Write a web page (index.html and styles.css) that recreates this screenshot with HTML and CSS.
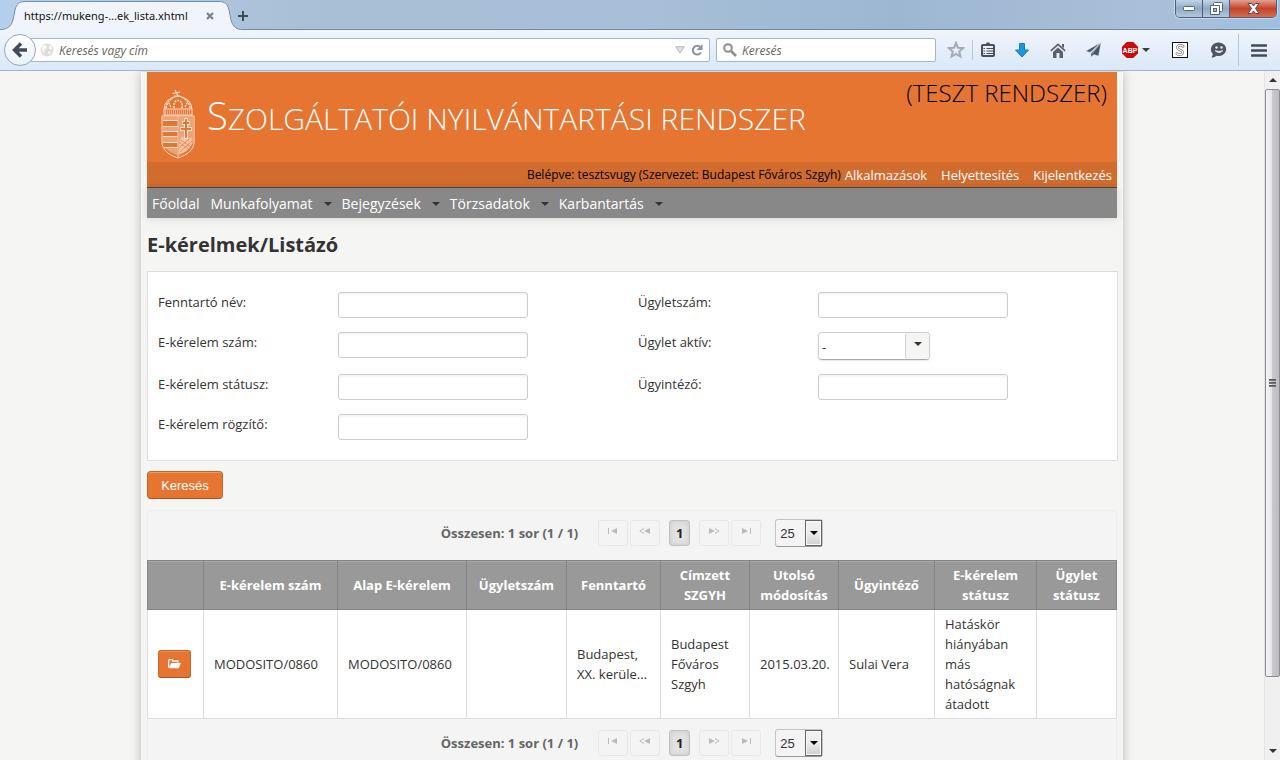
FILE: index.html
```html
<!DOCTYPE html>
<html lang="hu">
<head>
<meta charset="utf-8">
<title>E-kérelmek/Listázó</title>
<link rel="stylesheet" href="styles.css">
</head>
<body>
<div class="titlebar">
  <div class="tab">
    <svg class="tab-shape" viewBox="0 0 244 30" aria-hidden="true">
      <path d="M0 29.5C7 29.5 11 27 13 20L15 10C16.500 4 19 1.500 25 1.500H219C225 1.500 227.500 4 229 10L231 20C233 27 236 29.500 243 29.500V30H0Z" fill="#f1f5fb"/>
      <path d="M0 29.500C7 29.500 11 27 13 20L15 10C16.500 4 19 1.500 25 1.500H219C225 1.500 227.500 4 229 10L231 20C233 27 236 29.500 243 29.500" fill="none" stroke="#7590ae"/>
    </svg>
    <span class="tab-title">https://mukeng-...ek_lista.xhtml</span>
    <button class="tab-close" aria-label="Lap bezárása"><svg width="8" height="8" viewBox="0 0 8 8"><path d="M1 1L7 7M7 1L1 7" stroke="#77828e" stroke-width="2.200"/></svg></button>
  </div>
  <button class="tab-new" aria-label="Új lap"><svg width="10" height="10" viewBox="0 0 10 10"><path d="M5 0V10M0 5H10" stroke="#414c56" stroke-width="2"/></svg></button>
  <div class="window-buttons">
    <button class="win-btn" aria-label="Kis méret"><svg width="12" height="5" viewBox="0 0 12 5"><rect x=".5" y=".5" width="11" height="4" rx="1" fill="#fff" stroke="#53647a"/></svg></button>
    <button class="win-btn" aria-label="Előző méret"><svg width="13" height="13" viewBox="0 0 13 13"><rect x="3.500" y=".5" width="9" height="9" rx="1" fill="#fff" stroke="#53647a"/><path d="M.5 3.500H9.500V12.500H.500Z" fill="#fff" stroke="#53647a"/><rect x="3.500" y="6.500" width="3" height="3" fill="#a8bbd3" stroke="#53647a"/></svg></button>
    <button class="win-btn win-close" aria-label="Bezárás"><svg width="13" height="11" viewBox="0 0 13 11"><path d="M1 .5H4.500L6.500 3L8.500 .5H12L8.500 5.500L12 10.500H8.500L6.500 8L4.500 10.500H1L4.500 5.500Z" fill="#fff" stroke="#5b4450"/></svg></button>
  </div>
</div>

<div class="toolbar">
  <button class="back" aria-label="Vissza"><svg width="16" height="16" viewBox="0 0 16 16"><path d="M9 1.500L2.500 8L9 14.500M3 8H15" fill="none" stroke="#414c56" stroke-width="3.400"/></svg></button>
  <div class="urlbar">
    <svg width="14" height="14" viewBox="0 0 14 14" aria-hidden="true"><circle cx="7" cy="7" r="6.500" fill="#dcdcdc"/><path d="M2 3L6 2L7 5L4 7L5 11L2 8ZM9 2L12 4V7L9 6ZM8 8L11 9L9 12Z" fill="#f8f8f8"/></svg>
    <input class="bar-input" type="text" aria-label="Keresés vagy cím" placeholder="Keresés vagy cím">
    <svg width="10" height="8" viewBox="0 0 10 8" aria-hidden="true"><path d="M.8 .8H9.200L5 7Z" fill="#dfe4ea" stroke="#a9b3be"/></svg>
    <button class="reload" aria-label="Frissítés"><svg width="12" height="12" viewBox="0 0 12 12"><path d="M9.500 3.200A4.400 4.400 0 1 0 10 8.500" fill="none" stroke="#8793a1" stroke-width="2"/><path d="M11.500 0V6H5.500Z" fill="#8793a1"/></svg></button>
  </div>
  <div class="searchbar">
    <svg width="14" height="14" viewBox="0 0 14 14" aria-hidden="true"><circle cx="5" cy="5" r="3.800" fill="none" stroke="#8f8f8f" stroke-width="2"/><path d="M8 8L13 13" stroke="#8f8f8f" stroke-width="2.600"/></svg>
    <input class="bar-input" type="text" aria-label="Keresés" placeholder="Keresés">
  </div>
  <div class="tools">
    <button class="tool tool-small" aria-label="Könyvjelző"><svg width="18" height="18" viewBox="0 0 18 18"><path d="M9 2L11 6.800L16 7.200L12.200 10.500L13.400 15.500L9 12.800L4.600 15.500L5.800 10.500L2 7.200L7 6.800Z" fill="none" stroke="#a4abb4" stroke-width="2"/></svg></button>
    <button class="tool tool-small split" aria-label="Könyvjelzők"><svg width="14" height="16" viewBox="0 0 14 16"><rect x="1" y="3" width="12" height="11" rx="1" fill="none" stroke="#46515c" stroke-width="2"/><path d="M3 4V2.500H5L5.500 .5H8.500L9 2.500H11V4Z" fill="#46515c"/><path d="M2.500 6.500H4M5.500 6.500H12M2.500 9H4M5.500 9H12M2.500 11.500H4M5.500 11.500H12" stroke="#46515c" stroke-width="1.200"/></svg></button>
    <button class="tool" aria-label="Letöltések"><svg width="14" height="15" viewBox="0 0 14 15"><path d="M4.500 .5H9.500V7H13.500L7 14L.5 7H4.500Z" fill="#1c97dd" stroke="#157fbf"/></svg></button>
    <button class="tool" aria-label="Kezdőlap"><svg width="16" height="15" viewBox="0 0 16 15"><path d="M.8 7.800L8 1.400L15.200 7.800" fill="none" stroke="#56616c" stroke-width="1.600"/><path d="M3 9L8 4.600L13 9V15H9.500V10H6.500V15H3ZM12 1H14V5L12 3.500Z" fill="#56616c"/></svg></button>
    <button class="tool" aria-label="Küldés"><svg width="16" height="16" viewBox="0 0 16 16"><path d="M15 .5L0 9L4 10.500ZM15 .5L5 11.500V15L8 12.500L12.500 14ZM15 .5L6 12" fill="#4b5661" stroke="#dce8f5" stroke-width=".4"/></svg></button>
    <button class="tool tool-wide" aria-label="Adblock Plus"><svg width="16" height="16" viewBox="0 0 16 16"><path d="M4.700 0H11.300L16 4.700V11.300L11.300 16H4.700L0 11.300V4.700Z" fill="#c90b0b"/><text class="abp" x="8" y="11" text-anchor="middle">ABP</text></svg><svg width="8" height="4" viewBox="0 0 8 4"><path d="M0 0H8L4 4Z" fill="#333e48"/></svg></button>
    <button class="tool tool-s" aria-label="Stylish"><svg width="16" height="16" viewBox="0 0 16 16"><rect x=".5" y=".5" width="15" height="15" fill="#fff" stroke="#111"/><path d="M11 5.500V4Q8 2.500 6 4Q4 6.500 8 8Q12 9.500 10 12Q7.500 13.500 5 12V10.500" fill="none" stroke="#777" stroke-width="2.600"/><path d="M11 5V4Q8 2.500 6 4Q4 6.500 8 8Q12 9.500 10 12Q7.500 13.500 5 12V11" fill="none" stroke="#fff" stroke-width="1.200"/></svg></button>
    <button class="tool tool-s" aria-label="Hello"><svg width="17" height="16" viewBox="0 0 17 16"><path d="M9 .5A7.500 6.800 0 1 1 6.500 13.800Q4 16 1.500 15.200Q3 13.500 2.600 11.500A7.500 6.800 0 0 1 9 .5Z" fill="#4b5661"/><circle cx="6.500" cy="5.500" r="1.200" fill="#e8f0f8"/><circle cx="11.500" cy="5.500" r="1.200" fill="#e8f0f8"/><path d="M5 8.500Q9 13 13 8.500Q9 10 5 8.500Z" fill="#e8f0f8" stroke="#e8f0f8" stroke-width=".6"/></svg></button>
    <button class="tool tool-menu split" aria-label="Menü"><svg width="16" height="13" viewBox="0 0 16 13"><path d="M1 1.500H15M1 6.500H15M1 11.500H15" stroke="#414c56" stroke-width="2.600" stroke-linecap="round"/></svg></button>
  </div>
</div>

<div class="viewport">
  <div class="scroll-area">
    <main class="page">
      <header>
        <div class="banner">
          <svg class="crest" width="34" height="70" viewBox="0 0 34 70" aria-hidden="true">
            <g fill="none" stroke="#fbe3d5">
              <path d="M14 1L17 7M11.500 4.500L19 3M13 7H19" stroke-width="1.200"/>
              <path d="M3 20Q4 9 17 7Q30 9 31 20M3 20H31V26H3Z"/>
              <path d="M5 19Q6 12 12 9M29 19Q28 12 22 9M13 19V14Q17 9 21 14V19M10 18L8 14M24 18L26 14" stroke-width="1.500" stroke-dasharray="2 1"/>
              <path d="M4 22H30M4 24H30" stroke-dasharray="1 1"/>
              <path d="M1 27H33V53C33 61 26 66 17 69C8 66 1 61 1 53Z"/>
              <path d="M17 27V68"/>
              <path d="M2 31.500H17M2 37.500H17M2 42.500H17M2 47.500H17M2 53.500H17M3 58.500H17"/>
            </g>
            <path d="M2 28H16V31H2ZM2 38H16V42H2ZM2 48H16V53H2ZM4 59H16V66Q8 63 4 59ZM18 28H32V53Q31 60 18 66Z" fill="#fbe3d5" opacity=".42"/>
            <path d="M25 29V50M21 34H29M19 40H31" stroke="#fbe3d5" stroke-width="4" fill="none"/>
            <path d="M25 30V49M22 34H28M20 40H30" stroke="#e67531" stroke-width="2" fill="none"/>
            <path d="M19 51L21 47L24 50L26 47L28 50L30 48L31 51V54Q30 61 18 66V56Z" fill="#fbe3d5" opacity=".5"/>
            <path d="M18 53L28 61M20 51L30 58M31 52L19 63M28 50L18 59" stroke="#e67531" stroke-width=".7"/>
          </svg>
          <div class="brand">Szolgáltatói nyilvántartási rendszer</div>
          <div class="env">(TESZT RENDSZER)</div>
        </div>
        <div class="userbar">
          <span class="who">Belépve: tesztsvugy (Szervezet: Budapest Főváros Szgyh)</span>
          <a href="#">Alkalmazások</a><a href="#">Helyettesítés</a><a href="#">Kijelentkezés</a>
        </div>
        <nav class="nav">
          <a href="#">Főoldal</a>
          <a class="has-menu" href="#">Munkafolyamat</a>
          <a class="has-menu" href="#">Bejegyzések</a>
          <a class="has-menu" href="#">Törzsadatok</a>
          <a class="has-menu" href="#">Karbantartás</a>
        </nav>
      </header>

      <h1>E-kérelmek/Listázó</h1>

      <form id="filter" class="filter">
        <label for="f1">Fenntartó név:</label><input class="field" id="f1" type="text">
        <label for="f2">Ügyletszám:</label><input class="field" id="f2" type="text">
        <label for="f3">E-kérelem szám:</label><input class="field" id="f3" type="text">
        <label for="f4">Ügylet aktív:</label><span class="combo"><select id="f4"><option>-</option></select><span class="combo-arrow"></span></span>
        <label for="f5">E-kérelem státusz:</label><input class="field" id="f5" type="text">
        <label for="f6">Ügyintéző:</label><input class="field" id="f6" type="text">
        <label for="f7">E-kérelem rögzítő:</label><input class="field" id="f7" type="text">
      </form>
      <button class="primary" type="submit" form="filter">Keresés</button>

      <div class="pager pager-top">
        <span>Összesen: 1 sor (1 / 1)</span>
        <div class="pager-nav">
          <button class="pg" disabled aria-label="Első"><svg width="10" height="6" viewBox="0 0 10 6"><path d="M0 0H1V6H0ZM9 0V6L3 3Z"/></svg></button>
          <button class="pg" disabled aria-label="Előző"><svg width="12" height="6" viewBox="0 0 12 6"><path d="M11 0V6L5 3Z"/><path d="M5 .5L.8 3L5 5.500" class="line"/></svg></button>
          <button class="pg current">1</button>
          <button class="pg" disabled aria-label="Következő"><svg width="12" height="6" viewBox="0 0 12 6"><path d="M1 0V6L7 3Z"/><path d="M7 .5L11.200 3L7 5.500" class="line"/></svg></button>
          <button class="pg" disabled aria-label="Utolsó"><svg width="10" height="6" viewBox="0 0 10 6"><path d="M9 0H10V6H9ZM1 0V6L7 3Z"/></svg></button>
        </div>
        <span class="rows"><select aria-label="Sorok száma"><option>25</option></select><span class="rows-arrow"></span></span>
      </div>
      <table class="grid">
        <colgroup><col class="c-open"><col class="c-num"><col class="c-base"><col class="c-case"><col class="c-owner"><col class="c-office"><col class="c-date"><col class="c-clerk"><col class="c-status"><col class="c-end"></colgroup>
        <thead><tr><th></th><th>E-kérelem szám</th><th>Alap E-kérelem</th><th>Ügyletszám</th><th>Fenntartó</th><th>Címzett SZGYH</th><th>Utolsó módosítás</th><th>Ügyintéző</th><th>E-kérelem státusz</th><th>Ügylet státusz</th></tr></thead>
        <tbody><tr>
          <td><button class="open" aria-label="Megnyitás"><svg width="13" height="10" viewBox="0 0 13 10"><path d="M.7 8.500V1.300Q.7 .7 1.300 .7H4L5 2H9.500Q10 2 10 2.500V3.500" fill="none" stroke="#fff" stroke-width="1.300"/><path d="M3.300 4H13L10.600 9.300H.8Z" fill="#fff"/></svg></button></td>
          <td>MODOSITO/0860</td><td>MODOSITO/0860</td><td></td><td>Budapest, XX. kerüle...</td><td>Budapest Főváros Szgyh</td><td>2015.03.20.</td><td>Sulai Vera</td><td>Hatáskör hiányában más hatóságnak átadott</td><td></td>
        </tr></tbody>
      </table>
      <div class="pager">
        <span>Összesen: 1 sor (1 / 1)</span>
        <div class="pager-nav">
          <button class="pg" disabled aria-label="Első"><svg width="10" height="6" viewBox="0 0 10 6"><path d="M0 0H1V6H0ZM9 0V6L3 3Z"/></svg></button>
          <button class="pg" disabled aria-label="Előző"><svg width="12" height="6" viewBox="0 0 12 6"><path d="M11 0V6L5 3Z"/><path d="M5 .5L.8 3L5 5.500" class="line"/></svg></button>
          <button class="pg current">1</button>
          <button class="pg" disabled aria-label="Következő"><svg width="12" height="6" viewBox="0 0 12 6"><path d="M1 0V6L7 3Z"/><path d="M7 .5L11.200 3L7 5.500" class="line"/></svg></button>
          <button class="pg" disabled aria-label="Utolsó"><svg width="10" height="6" viewBox="0 0 10 6"><path d="M9 0H10V6H9ZM1 0V6L7 3Z"/></svg></button>
        </div>
        <span class="rows"><select aria-label="Sorok száma"><option>25</option></select><span class="rows-arrow"></span></span>
      </div>
    </main>
  </div>
  <div class="scrollbar" aria-hidden="true">
    <svg width="8" height="4" viewBox="0 0 8 4"><path d="M0 4H8L4 0Z" fill="#333"/></svg>
    <div class="track"><div class="thumb"><i></i><i></i><i></i></div></div>
    <svg width="8" height="4" viewBox="0 0 8 4"><path d="M0 0H8L4 4Z" fill="#333"/></svg>
  </div>
</div>
</body>
</html>
```

FILE: styles.css
```css
* { box-sizing: border-box; }
body {
  margin: 0;
  height: 100vh;
  display: flex;
  flex-direction: column;
  overflow: hidden;
  background: #f5f5f3;
  color: #333;
  font-family: "Open Sans", "Noto Sans", sans-serif;
  font-size: 13px;
  line-height: 20px;
}
button { border: 0; background: none; padding: 0; margin: 0; font: inherit; color: inherit; }
a { color: inherit; text-decoration: none; }
svg { display: block; flex: none; }

.titlebar {
  flex: none;
  height: 30px;
  display: flex;
  align-items: center;
  border-bottom: 1px solid #6f89a5;
  background: radial-gradient(ellipse at 100% 100%, #b9d8f5, transparent 60px), linear-gradient(90deg, #b4d0ec, #a9bfd5 25%, #a7bfd8 50%, #9db7d3 70%, #aabfd8 90%, #9fbfe0);
}
.tab {
  position: relative;
  width: 244px;
  height: 30px;
  margin-bottom: -1px;
  padding: 2px 30px 0 24px;
  display: flex;
  align-items: center;
  justify-content: space-between;
  color: #111;
  font: 11px/20px "Noto Sans", "Open Sans", sans-serif;
}
.tab-shape { position: absolute; inset: 0; width: 244px; height: 30px; }
.tab-title, .tab-close { position: relative; }
.tab-title { white-space: nowrap; }
.tab-new { margin-top: 2px; margin-left: -6px; }
.window-buttons {
  align-self: flex-start;
  margin: 0 3px 0 auto;
  display: flex;
  height: 18px;
  border: 1px solid #4e6078;
  border-top: 0;
  border-radius: 0 0 5px 5px;
  overflow: hidden;
  box-shadow: 0 0 0 1px #c8daed;
}
.win-btn {
  width: 27px;
  display: grid;
  place-items: center;
  border-right: 1px solid #4e6078;
  background: linear-gradient(#c2d3e7, #91a9c4 50%, #b4c8df);
}
.win-close { width: 46px; border: 0; background: linear-gradient(#e0a294, #c4432c 50%, #d56d51); }

.toolbar {
  flex: none;
  height: 41px;
  padding-left: 4px;
  display: flex;
  align-items: center;
  border-bottom: 1px solid #9fb3cc;
  background: linear-gradient(#f0f5fb, #dae8f8);
}
.back {
  position: relative;
  width: 32px;
  height: 32px;
  display: grid;
  place-items: center;
  border: 1px solid #93a7bd;
  border-radius: 50%;
  background: linear-gradient(#fff, #e9f1fa);
}
.urlbar, .searchbar {
  height: 24px;
  display: flex;
  align-items: center;
  border: 1px solid #a3b6cb;
  border-radius: 2px;
  background: #fff;
}
.urlbar { flex: 1; margin-left: -6px; padding: 0 6px 0 9px; }
.searchbar { width: 220px; margin: 0 4px 0 6px; padding: 0 6px; }
.bar-input {
  flex: 1;
  min-width: 0;
  border: 0;
  outline: 0;
  padding: 2px 5px 0;
  background: none;
  font: italic 12px/20px "Open Sans", "Noto Sans", sans-serif;
}
.bar-input::placeholder { color: #666; opacity: 1; }
.reload { margin-left: 6px; }
.tools { display: flex; height: 40px; }
.tool { width: 36px; display: flex; align-items: center; justify-content: center; gap: 4px; }
.tool-small { width: 32px; }
.tool-wide { width: 48px; }
.tool-s { width: 39px; }
.tool-menu { width: 42px; }
.split { background: linear-gradient(#b8c7d8, #b8c7d8) left center / 1px 20px no-repeat; }
.tool-menu.split { background-size: 1px 32px; }
.abp { fill: #fff; font: bold 7px "Liberation Sans", sans-serif; }

.viewport { flex: 1; min-height: 0; display: flex; }
.scroll-area { flex: 1; min-width: 0; overflow: hidden; padding: 1px 16px 0; }
.page {
  max-width: 982px;
  min-height: 100%;
  margin: 0 auto;
  padding: 0 6px;
  background: #f5f5f3;
  box-shadow: 0 0 10px rgba(0, 0, 0, .25);
}
.banner {
  height: 90px;
  padding: 0 10px 0 14px;
  display: flex;
  align-items: center;
  background: #e67531;
}
.crest { margin-top: 13px; }
.brand {
  margin: 0 0 0 12px;
  color: #fff;
  font-size: 30px;
  font-weight: 300;
  line-height: 48px;
  text-transform: uppercase;
  white-space: nowrap;
}
.brand::first-letter { font-size: 38px; }
.env {
  align-self: flex-start;
  margin: 5px 0 0 auto;
  color: #000;
  font-size: 24px;
  font-weight: 300;
  line-height: 32px;
  white-space: nowrap;
}
.userbar {
  height: 25px;
  padding: 0 5px;
  display: flex;
  align-items: center;
  justify-content: flex-end;
  gap: 14px;
  background: #d26c2e;
  color: #fff;
}
.who { margin-right: -10px; color: #000; font: 12px/20px "Open Sans", "Noto Sans", sans-serif; }
.nav {
  min-height: 31px;
  padding: 1px 5px 0;
  display: flex;
  align-items: center;
  gap: 11px;
  border-top: 1px solid #444;
  background: #888;
  box-shadow: 0 1px 8px rgba(0, 0, 0, .12);
  color: #fff;
  font-size: 14px;
}
.has-menu { display: flex; align-items: center; gap: 11px; }
.has-menu + .has-menu { margin-left: -1px; }
.has-menu::after { content: ""; border: 4px solid transparent; border-top-color: #333; border-bottom: 0; }

h1 { margin: 12px 0; font-size: 20px; font-weight: 700; line-height: 29px; }

.filter {
  margin-right: -1px;
  padding: 20px 10px;
  display: grid;
  grid-template-columns: 180px 300px 180px 1fr;
  row-gap: 14px;
  align-items: start;
  border: 1px solid #ddd;
  background: #fff;
}
.field {
  width: 190px;
  height: 26px;
  border: 1px solid #ccc;
  border-radius: 3px;
  background: #fff;
  box-shadow: inset 0 2px 2px #f4f4f4;
}
.combo {
  position: relative;
  width: 112px;
  height: 28px;
  border: 1px solid #d0d0d0;
  border-bottom-color: #aaa;
  border-radius: 4px;
  box-shadow: 0 1px 2px rgba(0, 0, 0, .1);
}
.combo select, .rows select {
  appearance: none;
  width: 100%;
  height: 100%;
  margin: 0;
  border: 0;
  background: none;
  color: #333;
}
.combo select { padding: 2px 3px 0; font: 13px "Open Sans", sans-serif; }
.combo-arrow {
  position: absolute;
  inset: 0 0 0 auto;
  width: 24px;
  display: grid;
  place-items: center;
  border-left: 1px solid #d0d0d0;
  border-radius: 3px;
  background: #f5f5f3;
  pointer-events: none;
}
.combo-arrow::after { content: ""; margin-bottom: 4px; border: 4px solid transparent; border-top-color: #333; border-bottom: 0; }
.primary {
  display: block;
  width: 76px;
  height: 28px;
  margin: 10px 0 11px;
  border: 1px solid #c9652a;
  border-bottom-color: #a95522;
  border-radius: 4px;
  background: #e67531;
  box-shadow: inset 0 1px #ec9a67;
  color: #fff;
  font: 13px "Liberation Sans", Arial, sans-serif;
}

.pager {
  height: 50px;
  padding-bottom: 2px;
  display: flex;
  align-items: center;
  justify-content: center;
  border: 1px solid #ececea;
  border-top: 0;
  border-bottom: 0;
  background: #f4f4f4;
  color: #666;
  font-weight: 700;
}
.pager-top { padding-bottom: 5px; border-top: 1px solid #ececea; border-radius: 4px 4px 0 0; }
.pager-nav { display: flex; gap: 2px; margin: 0 14px 0 20px; }
.pg {
  width: 30px;
  height: 26px;
  padding-bottom: 4px;
  display: grid;
  place-items: center;
  border: 1px solid #e8e8e8;
  border-radius: 3px;
  fill: #bbb;
}
.line { fill: none; stroke: #bbb; }
.current {
  width: 21px;
  margin: 0 7px;
  padding: 0;
  border-color: #c2c2c2;
  background: #e2e2e2;
  box-shadow: inset 0 0 5px #c8c8c8;
  color: #222;
}
.rows {
  position: relative;
  width: 48px;
  height: 28px;
  border: 1px solid #c4c4c4;
  border-bottom-color: #999;
  border-radius: 3px;
}
.rows select { padding: 0 4px; font: 13px "Liberation Sans", Arial, sans-serif; }
.rows-arrow {
  position: absolute;
  inset: 0 0 0 auto;
  width: 17px;
  display: grid;
  place-items: center;
  border: 1px solid #666;
  background: linear-gradient(#f3f3f3, #ebebeb 50%, #cfcfcf);
  box-shadow: inset 0 0 0 1px #fafafa;
  pointer-events: none;
}
.rows-arrow::after { content: ""; border: 4px solid transparent; border-top-color: #000; border-bottom: 0; }

.grid { width: 100%; table-layout: fixed; border-collapse: collapse; background: #fff; }
.grid th {
  height: 49px;
  padding: 4px 6px;
  border: 1px solid #848484;
  background: #999;
  box-shadow: inset 0 1px #aaa;
  color: #fff;
  font-weight: 700;
}
.grid td { padding: 4px 10px; border: 1px solid #ddd; }
.c-open { width: 56px; }
.c-num { width: 134px; }
.c-base { width: 129px; }
.c-case { width: 100px; }
.c-owner { width: 94px; }
.c-office, .c-date { width: 89px; }
.c-clerk { width: 96px; }
.c-status { width: 102px; }
.open {
  width: 33px;
  height: 28px;
  display: grid;
  place-items: center;
  border: 1px solid #c9652a;
  border-bottom-color: #a95522;
  border-radius: 3px;
  background: #e67531;
  box-shadow: inset 0 1px #ec8d55;
}

.scrollbar {
  width: 16px;
  padding: 7px 0;
  display: flex;
  flex-direction: column;
  align-items: center;
  gap: 7px;
  border-left: 1px solid #e3e3e3;
  background: #f0f0f0;
}
.track { flex: 1; width: 100%; }
.thumb {
  height: 90%;
  display: flex;
  flex-direction: column;
  align-items: center;
  justify-content: center;
  gap: 1px;
  border: 1px solid #8e8e90;
  border-radius: 2px;
  background: linear-gradient(90deg, #f4f4f4, #e6e6e8 45%, #c8c8ce 50%, #bcbcc4);
}
.thumb i { width: 7px; height: 2px; background: linear-gradient(#444, #888); }
```
